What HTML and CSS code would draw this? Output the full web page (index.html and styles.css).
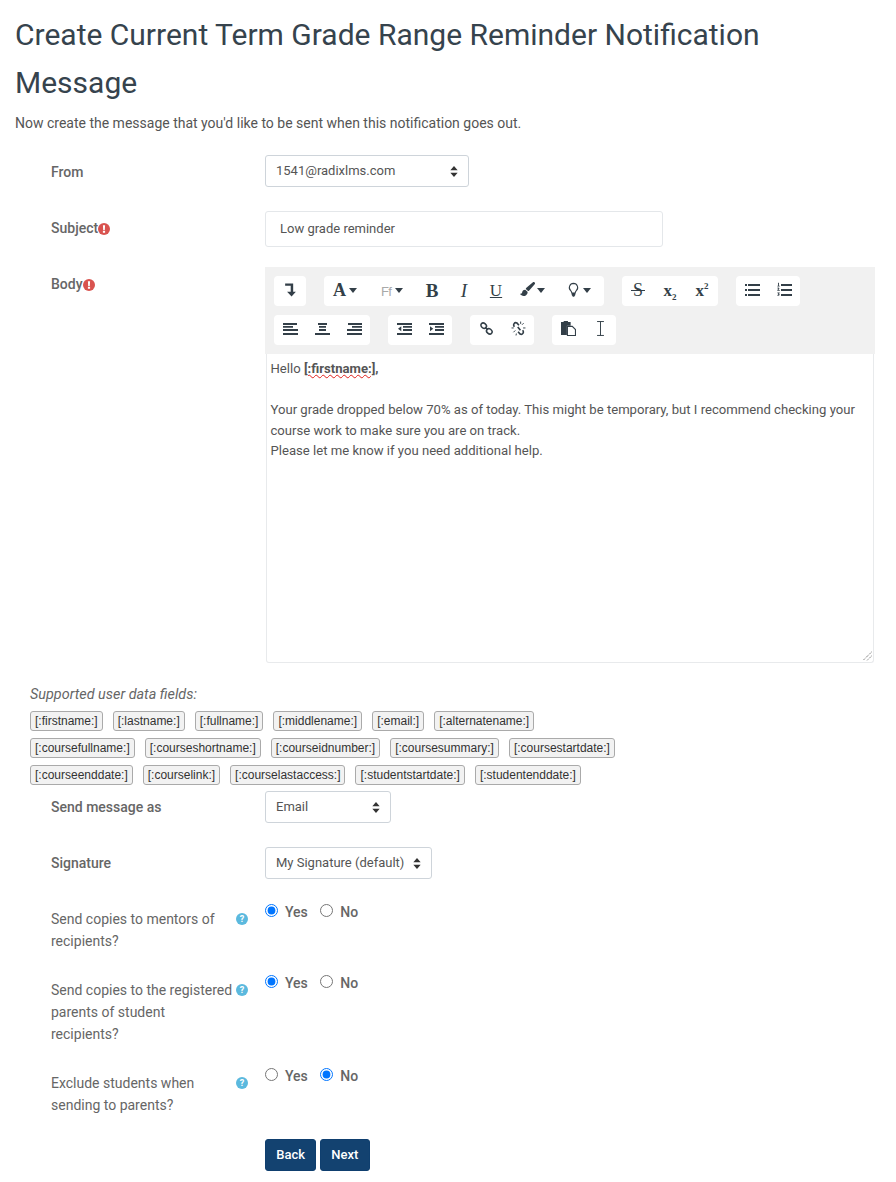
FILE: index.html
```html
<!DOCTYPE html>
<html lang="en">
<head>
<meta charset="utf-8">
<title>Create Current Term Grade Range Reminder Notification Message</title>
<link rel="stylesheet" href="styles.css">
</head>
<body>
<main class="page">
  <h1 class="title">Create Current Term Grade Range Reminder Notification Message</h1>
  <p class="intro">Now create the message that you'd like to be sent when this notification goes out.</p>

  <div class="row row-from">
    <label class="label">From</label>
    <div class="select select-from"><span>1541@radixlms.com</span><svg class="updown" viewBox="0 0 8 12"><path d="M4 0l4 4.6H0zM4 12L0 7.4h8z"/></svg></div>
  </div>
  <div class="row row-subject">
    <label class="label">Subject<svg class="req" viewBox="0 0 12 12"><circle cx="6" cy="6" r="6"/><path class="mark" d="M4.900 2.300h2.200l-.3 4.600H5.200zM4.900 7.800h2.200v2H4.900z"/></svg></label>
    <div class="input">Low grade reminder</div>
  </div>
  <div class="row row-body">
    <label class="label">Body<svg class="req" viewBox="0 0 12 12"><circle cx="6" cy="6" r="6"/><path class="mark" d="M4.900 2.300h2.200l-.3 4.600H5.200zM4.900 7.800h2.200v2H4.900z"/></svg></label>
    <div class="editor">
      <div class="toolbar">
        <div class="tool-row">
          <div class="group">
            <span class="btn"><svg class="ico" viewBox="0 0 14 14"><path d="M2 1.500h7.500V9H12L8 13.500 3.800 9h3.400V3.500H2z"/></svg></span>
          </div>
          <div class="group">
            <span class="btn btn-font"><span class="glyph glyph-a">A</span><i class="caret"></i></span>
            <span class="btn btn-size"><span class="glyph glyph-ff">Ff</span><i class="caret caret-ff"></i></span>
            <span class="btn"><span class="glyph glyph-b">B</span></span>
            <span class="btn"><span class="glyph glyph-i">I</span></span>
            <span class="btn"><span class="glyph glyph-u">U</span></span>
            <span class="btn btn-menu"><svg class="ico" viewBox="0 0 14 14"><path d="M13.600.4c-.5-.5-1.200-.4-1.800.1L6 5.400c-.4.3-.5.700-.6 1.100l2.100 2c.4-.1.800-.3 1.100-.6l5.100-5.800c.5-.6.500-1.300-.1-1.700zM4.900 7.200c-1.900.1-2.700 1.200-2.900 2.500-.1.900-.9 1.300-2 1.300 1 1.900 3.400 2.700 5.400 1.500 1.300-.8 2-2.100 1.600-3.400z"/></svg><i class="caret"></i></span>
            <span class="btn btn-menu"><svg class="ico" viewBox="0 0 14 14"><path class="line" d="M7 1.300a3.900 3.900 0 0 0-2.600 6.800c.6.700.9 1.300 1 2.100h3.200c.1-.8.400-1.400 1-2.100A3.900 3.900 0 0 0 7 1.300z"/><path d="M5.300 10.300h3.400v1.800L7.600 13.700H6.400L5.300 12.100z"/></svg><i class="caret"></i></span>
          </div>
          <div class="group">
            <span class="btn"><span class="glyph glyph-s">S</span></span>
            <span class="btn"><span class="glyph glyph-x">x<sub>2</sub></span></span>
            <span class="btn"><span class="glyph glyph-x">x<sup>2</sup></span></span>
          </div>
          <div class="group">
            <span class="btn"><svg class="ico" viewBox="0 0 15 15"><path d="M0 2h2v2H0zM3 2h12v2H3zM0 7h2v2H0zM3 7h12v2H3zM0 12h2v2H0zM3 12h12v2H3z"/></svg></span>
            <span class="btn"><svg class="ico" viewBox="0 0 15 15"><path d="M4 2h11v2H4zM4 7h11v2H4zM4 12h11v2H4zM.8 1.200L2 .5v3.300h.7v.7H.400v-.7h.7V1.600zM.4 5.800c1.400-.7 2.500.3 1.700 1.400l-.7.8h1.400v.7H.300v-.6l1-1.100c.3-.5-.2-.8-.9-.4zM.4 10.500h2.300v.5l-.7.8c1 .3 1 2.500-1.600 2.100v-.7c1.300.2 1.600-.7.400-.8v-.5l.7-.7H.400z"/></svg></span>
          </div>
        </div>
        <div class="tool-row">
          <div class="group">
            <span class="btn"><svg class="ico" viewBox="0 0 15 15"><path d="M0 2h14v2H0zM0 5h10v1.800H0zM0 8h15v2H0zM0 12h15v2H0z"/></svg></span>
            <span class="btn"><svg class="ico" viewBox="0 0 15 15"><path d="M3 2h9v2H3zM4 5h7v1.800H4zM4 8h7v2H4zM0 12h15v2H0z"/></svg></span>
            <span class="btn"><svg class="ico" viewBox="0 0 15 15"><path d="M1 2h14v2H1zM5 5h10v1.800H5zM0 8h15v2H0zM0 12h15v2H0z"/></svg></span>
          </div>
          <div class="group">
            <span class="btn"><svg class="ico" viewBox="0 0 15 15"><path d="M0 2h15v2H0zM6 5h9v1.800H6zM6 8h9v2H6zM0 12h15v2H0zM4.300 5.200v5L1 7.700z"/></svg></span>
            <span class="btn"><svg class="ico" viewBox="0 0 15 15"><path d="M0 2h15v2H0zM6 5h9v1.800H6zM6 8h9v2H6zM0 12h15v2H0zM1 5.200v5l3.300-2.500z"/></svg></span>
          </div>
          <div class="group">
            <span class="btn"><svg class="ico" viewBox="0 0 15 15"><g class="line thick"><ellipse cx="4.700" cy="4.700" rx="3" ry="2.400" transform="rotate(40 4.700 4.700)"/><ellipse cx="10.300" cy="10.300" rx="3" ry="2.400" transform="rotate(40 10.300 10.300)"/><path d="M6 6l3 3"/></g></svg></span>
            <span class="btn"><svg class="ico" viewBox="0 0 14 14"><path class="line thick" d="M3.200 5.300C1.500 3.500 3.300.6 5.500 1.800l1.900 2.200M6.300 5.500l2.500 3.200M10.800 8.700c1.700 1.800-.1 4.700-2.300 3.500L6.600 10"/><path class="line thin" d="M.5 6.500h2M4 8.800l-1.700 1.700M9 .5v2.200M13.500 6.500h-2.200M11.800 2l-1.500 1.500M4.700 13.500l.3-1.800"/></svg></span>
          </div>
          <div class="group">
            <span class="btn"><svg class="ico" viewBox="0 0 14 14"><path d="M0 1h2.500V0h4v1H9v3.500H5.500V13H0z"/><path class="line page-sheet" d="M6 5h4.500L13.500 8v5.500H6z"/></svg></span>
            <span class="btn"><svg class="ico" viewBox="0 0 14 14"><path class="line thin" d="M3.800.5h6.400M3.800 13.500h6.400M7 .5v13"/></svg></span>
          </div>
        </div>
      </div>
      <div class="content">
        <p>Hello <strong class="misspelled">[:firstname:]</strong><strong>,</strong></p>
        <p>&nbsp;</p>
        <p>Your grade dropped below 70% as of today. This might be temporary, but I recommend checking your course work to make sure you are on track.</p>
        <p>Please let me know if you need additional help.</p>
        <svg class="grip" viewBox="0 0 10 10"><path d="M9.500 1L1 9.500M9.500 5L5 9.500"/></svg>
      </div>
    </div>
  </div>

  <section class="fields">
    <p class="fields-title">Supported user data fields:</p>
    <div class="chips">
      <span class="chip">[:firstname:]</span><span class="chip">[:lastname:]</span><span class="chip">[:fullname:]</span><span class="chip">[:middlename:]</span><span class="chip">[:email:]</span><span class="chip">[:alternatename:]</span>
    </div>
    <div class="chips">
      <span class="chip">[:coursefullname:]</span><span class="chip">[:courseshortname:]</span><span class="chip">[:courseidnumber:]</span><span class="chip">[:coursesummary:]</span><span class="chip">[:coursestartdate:]</span>
    </div>
    <div class="chips">
      <span class="chip">[:courseenddate:]</span><span class="chip">[:courselink:]</span><span class="chip">[:courselastaccess:]</span><span class="chip">[:studentstartdate:]</span><span class="chip">[:studentenddate:]</span>
    </div>
  </section>

  <div class="row row-send">
    <label class="label">Send message as</label>
    <div class="select select-send"><span>Email</span><svg class="updown" viewBox="0 0 8 12"><path d="M4 0l4 4.600H0zM4 12L0 7.400h8z"/></svg></div>
  </div>
  <div class="row row-sig">
    <label class="label">Signature</label>
    <div class="select select-sig"><span>My Signature (default)</span><svg class="updown" viewBox="0 0 8 12"><path d="M4 0l4 4.600H0zM4 12L0 7.400h8z"/></svg></div>
  </div>

  <div class="row row-radio row-mentors">
    <div class="label-help"><span class="plain">Send copies to mentors of recipients?</span><svg class="help" viewBox="0 0 12 12"><circle cx="6" cy="6" r="6"/><text x="6" y="9.300" text-anchor="middle">?</text></svg></div>
    <div class="radios"><label class="radio"><input type="radio" name="a" checked>Yes</label><label class="radio"><input type="radio" name="a">No</label></div>
  </div>
  <div class="row row-radio row-parents">
    <div class="label-help"><span class="plain">Send copies to the registered parents of student recipients?</span><svg class="help" viewBox="0 0 12 12"><circle cx="6" cy="6" r="6"/><text x="6" y="9.300" text-anchor="middle">?</text></svg></div>
    <div class="radios"><label class="radio"><input type="radio" name="b" checked>Yes</label><label class="radio"><input type="radio" name="b">No</label></div>
  </div>
  <div class="row row-radio row-exclude">
    <div class="label-help"><span class="plain">Exclude students when sending to parents?</span><svg class="help" viewBox="0 0 12 12"><circle cx="6" cy="6" r="6"/><text x="6" y="9.300" text-anchor="middle">?</text></svg></div>
    <div class="radios"><label class="radio"><input type="radio" name="c">Yes</label><label class="radio"><input type="radio" name="c" checked>No</label></div>
  </div>

  <div class="actions">
    <button class="action" type="button">Back</button>
    <button class="action" type="button">Next</button>
  </div>
</main>
</body>
</html>
```
FILE: styles.css
```css
* { box-sizing: border-box; }
html, body { margin: 0; padding: 0; background: #fff; }
body { font-family: Roboto, "Liberation Sans", sans-serif; font-size: 14px; color: #555; }
.page { padding: 11px 21px 0 15px; min-height: 1182px; }
.title { margin: 0; font-size: 30px; font-weight: 400; line-height: 47.500px; color: #36434d; }
.intro { margin: 7px 0 0; line-height: 21px; height: 21px; color: #555; }

.row { display: flex; align-items: flex-start; }
.label { width: 250px; padding-left: 36px; display: flex; align-items: center; font-weight: 500; color: #666; line-height: 21px; flex: none; }
.row-from { margin-top: 21px; }
.row-send .label, .row-sig .label { padding-top: 6px; }
.row-from .label { padding-top: 7px; }
.row-subject { margin-top: 24px; }
.row-subject .label { padding-top: 7px; }
.row-body { margin-top: 20px; }
.row-body .label { padding-top: 7px; }
.req { width: 12px; height: 12px; fill: #d9534f; }
.req .mark { fill: #fff; }

.select { position: relative; height: 32px; border: 1px solid #ced4da; border-radius: 3px; padding: 0 10px; display: flex; align-items: center; justify-content: space-between; font-size: 13px; color: #555; line-height: 28px; background: #fff; }
.select-from { width: 204px; }
.select-send { width: 126px; }
.select-sig { width: 167px; }
.updown { width: 8px; height: 11px; fill: #333; flex: none; }
.input { width: 398px; height: 36px; border: 1px solid #e4e7ea; border-radius: 3px; padding: 0 14px; font-size: 13px; line-height: 34px; color: #555; }

.editor { width: 610px; flex: none; }
.toolbar { background: #f1f1f1; height: 87px; padding: 9px 9px 0; }
.tool-row { display: flex; gap: 18px; height: 30px; margin-bottom: 9px; }
.group { display: flex; background: #fff; border-radius: 4px; height: 30px; }
.btn { width: 32px; height: 30px; display: flex; align-items: center; justify-content: center; flex: none; color: #333f48; }
.btn-font { width: 42px; justify-content: flex-start; padding-left: 9px; }
.btn-size { width: 50px; justify-content: flex-start; padding-left: 15px; }
.btn-menu { width: 46px; justify-content: flex-start; padding-left: 8px; }
.ico { width: 15px; height: 15px; fill: #333f48; margin-bottom: 3px; flex: none; }
.ico .line { fill: none; stroke: #333f48; stroke-width: 1; }
.ico .page-sheet { fill: #fff; }
.ico .thick { stroke-width: 1.500; }
.ico .thin { stroke-width: .9; }
.caret { display: inline-block; width: 0; height: 0; border: 4.500px solid transparent; border-top: 5px solid #333f48; border-bottom: 0; margin: 0 0 2px 2px; }
.btn-font .caret { margin-left: 3px; }
.btn-size .caret { margin-left: 4px; }
.glyph { font-family: "Liberation Serif", serif; line-height: 1; color: #333f48; margin-bottom: 2px; }
.glyph-a { font-size: 18px; font-weight: 700; }
.glyph-ff { font-family: "Liberation Sans", sans-serif; font-size: 13px; letter-spacing: -.600px; color: #a9a9a9; margin-bottom: 0; }
.glyph-b { font-size: 19px; font-weight: 700; }
.glyph-i { font-size: 19px; font-style: italic; }
.glyph-u { font-size: 17px; text-decoration: underline; }
.glyph-s { font-size: 18px; position: relative; }
.glyph-s::after { content: ""; position: absolute; left: -2px; right: -2px; top: 9px; height: 1px; background: #333f48; }
.glyph-x { font-size: 17px; font-weight: 700; }
.glyph-x sub, .glyph-x sup { font-size: 9px; line-height: 0; }

.content { position: relative; height: 309px; margin: 0 1px; border: 1px solid #e8eaec; border-top: 0; border-radius: 0 0 3px 3px; padding: 5px 3.500px; font-size: 13.120px; line-height: 20.500px; color: #555; }
.content p { margin: 0; }
.misspelled { text-decoration: underline wavy #e0201b 1px; text-underline-offset: 1px; }
.grip { position: absolute; right: 1px; bottom: 1px; width: 10px; height: 10px; fill: none; stroke: #555; stroke-width: 1; stroke-dasharray: 1 1; }

.fields { padding-left: 15px; margin-top: 22px; }
.fields-title { margin: 0 0 -1px; font-size: 14.400px; font-style: italic; line-height: 20px; color: #666; }
.chips { display: flex; gap: 10px; margin-top: 7px; }
.chip { font-family: "Liberation Sans", sans-serif; font-size: 12px; line-height: 18px; height: 20px; padding: 0 4px; border: 1px solid #aaa; border-radius: 3px; background: #f2f2f2; color: #333; }

.row-send { margin-top: 6px; }
.row-sig { margin-top: 24px; }
.label-help { width: 250px; flex: none; padding: 6px 17px 0 36px; display: flex; justify-content: space-between; align-items: flex-start; line-height: 22px; color: #666; }
.plain { width: 182px; }
.help { width: 12px; height: 12px; margin-top: 5px; fill: #5bb9de; flex: none; }
.help text { font: 700 9px Roboto, sans-serif; fill: #fff; }
.row-mentors { margin-top: 23px; }
.row-parents { margin-top: 21px; }
.row-exclude { margin-top: 21px; }
.radios { display: flex; gap: 12.500px; font-weight: 500; color: #666; line-height: 22px; }
.radio { display: flex; align-items: center; gap: 7px; height: 20px; }
.radio input { margin: 0 0 3px; width: 13px; height: 13px; }

.actions { display: flex; gap: 4px; padding-left: 250px; margin-top: 23px; }
.action { height: 32px; padding: 0 10.200px; border: 1px solid #0f3f6f; border-radius: 3px; background: #134270; color: #fff; font: 500 13px/30px Roboto, sans-serif; }
```
